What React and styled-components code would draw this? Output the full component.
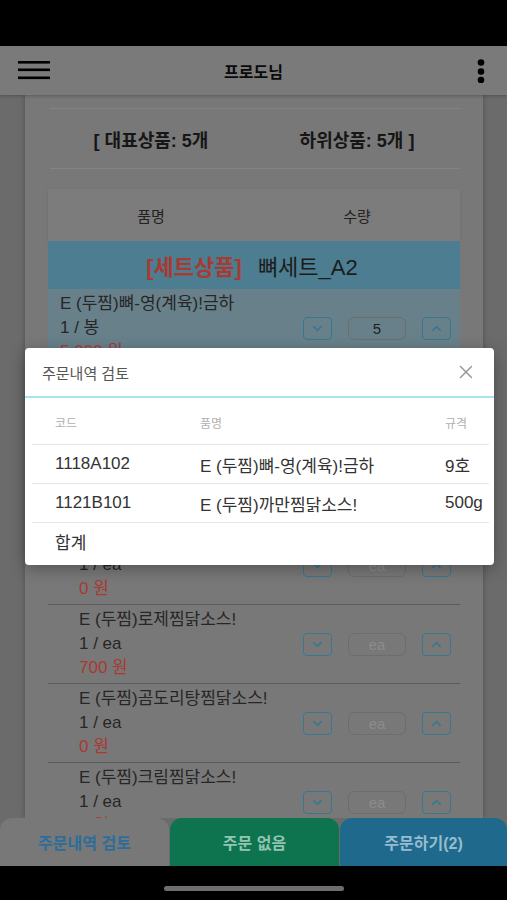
import React from "react";
import styled, { createGlobalStyle } from "styled-components";
import { ChevronDown, ChevronUp, X } from "lucide-react";

/* Page colours are given as they appear behind the modal's dimming. */
const GlobalStyle = createGlobalStyle`
  html, body { margin: 0; padding: 0; background: #000; }
  body { font-family: "Liberation Sans", "Noto Sans CJK KR", sans-serif; }
  #root { height: 900px; overflow: hidden; }
  * { box-sizing: border-box; }
`;

const Screen = styled.div`
  height: 900px;
  display: flex;
  flex-direction: column;
  background: #000;
  position: relative;
  overflow: hidden;
`;

const StatusBar = styled.div`
  height: 46px;
  flex: none;
  background: #000;
`;

const TopBar = styled.header`
  height: 49px;
  flex: none;
  background: #7a7a7a;
  display: flex;
  align-items: center;
  justify-content: space-between;
  padding: 0 22px 0 18px;
  position: relative;
  z-index: 2;
  box-shadow: 0 1px 3px rgba(0, 0, 0, 0.25);
`;

const IconButton = styled.button`
  border: 0;
  background: none;
  padding: 0;
  display: flex;
  align-items: center;
  justify-content: center;
`;

const Title = styled.h1`
  margin: 0;
  font-size: 16px;
  font-weight: 700;
  color: #0a0a0a;
  position: absolute;
  left: 0;
  right: 0;
  text-align: center;
  pointer-events: none;
`;

const Content = styled.main`
  flex: 1;
  overflow: hidden;
  background: #6b6b6b;
  padding: 0 24px 0 25px;
`;

const Panel = styled.section`
  background: #787878;
  padding: 13px 23px 0;
  height: 100%;
  box-shadow: -2px 0 4px rgba(0, 0, 0, 0.12), 2px 0 4px rgba(0, 0, 0, 0.12);
`;

const Divider = styled.div`
  height: 1px;
  background: #838383;
  margin: 0 0 0 2px;
`;

const Summary = styled.div`
  height: 59px;
  display: grid;
  grid-template-columns: 1fr 1fr;
  align-items: center;
`;

const SummaryItem = styled.div`
  text-align: center;
  font-size: 18px;
  font-weight: 700;
  color: #161616;
`;

const OrderTable = styled.div`
  margin-top: 20px;
`;

const TableHead = styled.div`
  height: 52px;
  display: grid;
  grid-template-columns: 1fr 1fr;
  align-items: center;
  background: #7c7c7c;
  box-shadow: 0 1px 3px rgba(0, 0, 0, 0.1);
`;

const HeadCell = styled.div`
  text-align: center;
  font-size: 15px;
  color: #222;
`;

const SetBand = styled.div`
  height: 48px;
  background: rgb(76, 125, 145);
  display: flex;
  align-items: center;
  justify-content: center;
  gap: 16px;
  font-size: 22px;
  color: #1c1c1c;
  padding-right: 4px;
`;

const SetTag = styled.span`
  color: #a83a32;
  font-weight: 700;
`;

const ItemRow = styled.div`
  display: flex;
  align-items: center;
  justify-content: space-between;
  padding: 3px 9px 3px ${(p) => (p.$indent ? 31 : 12)}px;
  background: ${(p) => (p.$highlight ? "rgb(104, 128, 138)" : "transparent")};
  border-bottom: 1px solid #5c5c5c;
`;

const ItemInfo = styled.div`
  display: flex;
  flex-direction: column;
  font-size: 17px;
  line-height: 24px;
  color: #262626;
  white-space: nowrap;
`;

const Price = styled.span`
  color: #a83a32;
`;

const Stepper = styled.div`
  display: flex;
  align-items: center;
  gap: 16px;
`;

const StepButton = styled.button`
  width: 29px;
  height: 23px;
  padding: 0;
  border: 1.5px solid rgb(54, 120, 144);
  border-radius: 4px;
  background: transparent;
  color: rgb(54, 120, 144);
  display: flex;
  align-items: center;
  justify-content: center;
`;

const QtyBox = styled.div`
  width: 58px;
  height: 23px;
  border: 1px solid #6d6d6d;
  border-radius: 6px;
  display: flex;
  align-items: center;
  justify-content: center;
  font-size: 15px;
  color: ${(p) => (p.$placeholder ? "#8c8c8c" : "#1f1f1f")};
`;

const BottomBar = styled.nav`
  height: 48px;
  flex: none;
  display: grid;
  grid-template-columns: 169px 169px 1fr;
  gap: 1px;
  background: #6b6b6b;
`;

const variants = {
  review: { bg: "#787878", fg: "rgb(46, 109, 154)" },
  none: { bg: "rgb(14, 116, 80)", fg: "#93c4b3" },
  order: { bg: "rgb(31, 106, 140)", fg: "#95bccf" },
};

const ActionButton = styled.button`
  border: 0;
  border-radius: 12px 12px 0 0;
  background: ${(p) => variants[p.$variant].bg};
  color: ${(p) => variants[p.$variant].fg};
  font-family: inherit;
  font-size: 16px;
  font-weight: 700;
  padding: 0;
  white-space: nowrap;
`;

const HomeBar = styled.div`
  height: 34px;
  flex: none;
  background: #000;
  display: flex;
  justify-content: center;
  padding-top: 20px;
`;

const HomePill = styled.div`
  width: 180px;
  height: 5px;
  border-radius: 3px;
  background: #6e6e6e;
`;

const ModalLayer = styled.div`
  position: absolute;
  top: 0;
  left: 0;
  width: 100%;
  height: 100%;
  padding: 348px 13px 0 25px;
  z-index: 10;
`;

const Modal = styled.div`
  width: 469px;
  background: #fff;
  border-radius: 4px;
  box-shadow: 0 4px 16px rgba(0, 0, 0, 0.3);
  overflow: hidden;
`;

const ModalHeader = styled.div`
  height: 48px;
  display: flex;
  align-items: center;
  justify-content: space-between;
  padding: 0 17px 0 17px;
`;

const ModalTitle = styled.h2`
  margin: 0;
  font-size: 15px;
  font-weight: 400;
  color: #555;
`;

const CloseButton = styled.button`
  border: 0;
  background: none;
  padding: 0;
  color: #999;
  display: flex;
`;

const ModalRule = styled.div`
  height: 2px;
  background: #a6e3ef;
`;

const ReviewTable = styled.div`
  padding: 0 5px 0 7px;
`;

const ReviewRow = styled.div`
  display: grid;
  grid-template-columns: 145px 245px 1fr;
  padding-left: 23px;
  align-items: center;
  white-space: nowrap;
  height: ${(p) => p.$h}px;
  border-top: ${(p) => (p.$first ? "0" : "1px solid #e6e6e6")};
  ${(p) => (p.$head ? "align-items: end; padding-bottom: 13px;" : "")}
  ${(p) => (p.$total ? "padding-bottom: 5px;" : "")}
`;

const ReviewHeadCell = styled.div`
  font-size: 12px;
  color: #b0b0b0;
`;

const ReviewCell = styled.div`
  font-size: 17px;
  color: #333;
`;

const Hamburger = () => (
  <svg width="32" height="20" viewBox="0 0 32 20">
    <rect x="0" y="0" width="32" height="2.6" fill="#000" />
    <rect x="0" y="7.5" width="32" height="2.6" fill="#000" />
    <rect x="0" y="15.5" width="32" height="2.6" fill="#000" />
  </svg>
);

const Kebab = () => (
  <svg width="8" height="24" viewBox="0 0 8 24">
    <circle cx="4" cy="3.5" r="3.3" fill="#000" />
    <circle cx="4" cy="12.5" r="3.3" fill="#000" />
    <circle cx="4" cy="21" r="3.3" fill="#000" />
  </svg>
);

const items = [
  { name: "E (두찜)뼈-영(계육)!금하", unit: "1 / 봉", price: "5,000 원", qty: "5", highlight: true },
  { name: "E (두찜)까만찜닭소스!", unit: "1 / ea", price: "0 원", qty: "", indent: true },
  { name: "E (두찜)간장찜닭소스!", unit: "1 / ea", price: "0 원", qty: "", indent: true },
  { name: "E (두찜)매운찜닭소스!", unit: "1 / ea", price: "0 원", qty: "", indent: true },
  { name: "E (두찜)로제찜닭소스!", unit: "1 / ea", price: "700 원", qty: "", indent: true },
  { name: "E (두찜)곰도리탕찜닭소스!", unit: "1 / ea", price: "0 원", qty: "", indent: true },
  { name: "E (두찜)크림찜닭소스!", unit: "1 / ea", price: "0 원", qty: "", indent: true },
];

const review = [
  { code: "1118A102", name: "E (두찜)뼈-영(계육)!금하", spec: "9호" },
  { code: "1121B101", name: "E (두찜)까만찜닭소스!", spec: "500g" },
];

export default function App() {
  return (
    <>
      <GlobalStyle />
      <Screen>
        <StatusBar />
        <TopBar>
          <IconButton aria-label="menu"><Hamburger /></IconButton>
          <Title>프로도님</Title>
          <IconButton aria-label="more"><Kebab /></IconButton>
        </TopBar>
        <Content>
          <Panel>
            <Divider />
            <Summary>
              <SummaryItem>[ 대표상품: 5개</SummaryItem>
              <SummaryItem>하위상품: 5개 ]</SummaryItem>
            </Summary>
            <Divider />
            <OrderTable>
              <TableHead>
                <HeadCell>품명</HeadCell>
                <HeadCell>수량</HeadCell>
              </TableHead>
              <SetBand>
                <SetTag>[세트상품]</SetTag>
                <span>뼈세트_A2</span>
              </SetBand>
              {items.map((it, i) => (
                <ItemRow key={i} $highlight={it.highlight} $indent={it.indent}>
                  <ItemInfo>
                    <span>{it.name}</span>
                    <span>{it.unit}</span>
                    <Price>{it.price}</Price>
                  </ItemInfo>
                  <Stepper>
                    <StepButton aria-label="down"><ChevronDown size={15} strokeWidth={2.5} /></StepButton>
                    <QtyBox $placeholder={!it.qty}>{it.qty || "ea"}</QtyBox>
                    <StepButton aria-label="up"><ChevronUp size={15} strokeWidth={2.5} /></StepButton>
                  </Stepper>
                </ItemRow>
              ))}
            </OrderTable>
          </Panel>
        </Content>
        <BottomBar>
          <ActionButton $variant="review">주문내역 검토</ActionButton>
          <ActionButton $variant="none">주문 없음</ActionButton>
          <ActionButton $variant="order">주문하기(2)</ActionButton>
        </BottomBar>
        <HomeBar><HomePill /></HomeBar>
        <ModalLayer>
          <Modal>
            <ModalHeader>
              <ModalTitle>주문내역 검토</ModalTitle>
              <CloseButton aria-label="close"><X size={22} strokeWidth={1.6} /></CloseButton>
            </ModalHeader>
            <ModalRule />
            <ReviewTable>
              <ReviewRow $head $first $h={46}>
                <ReviewHeadCell>코드</ReviewHeadCell>
                <ReviewHeadCell>품명</ReviewHeadCell>
                <ReviewHeadCell>규격</ReviewHeadCell>
              </ReviewRow>
              {review.map((r) => (
                <ReviewRow key={r.code} $h={39}>
                  <ReviewCell>{r.code}</ReviewCell>
                  <ReviewCell>{r.name}</ReviewCell>
                  <ReviewCell>{r.spec}</ReviewCell>
                </ReviewRow>
              ))}
              <ReviewRow $h={43} $total>
                <ReviewCell>합계</ReviewCell>
              </ReviewRow>
            </ReviewTable>
          </Modal>
        </ModalLayer>
      </Screen>
    </>
  );
}
